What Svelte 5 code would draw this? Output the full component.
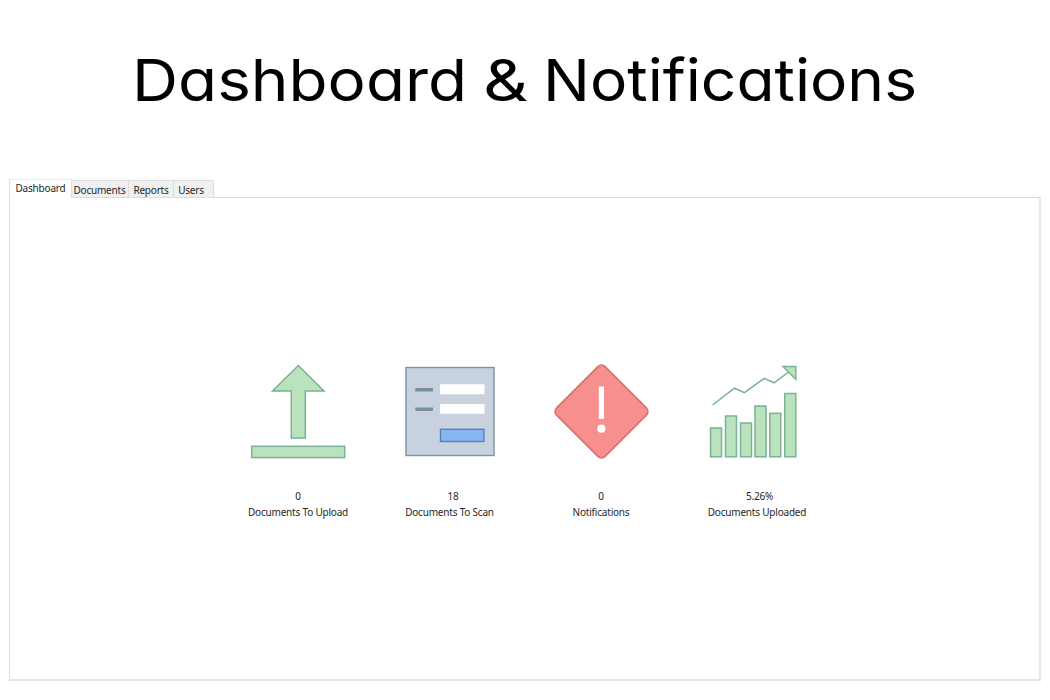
<script>
  const tabs = [
    { name: 'Documents', width: 58 },
    { name: 'Reports', width: 45 },
    { name: 'Users', width: 40 }
  ];
  const bars = [
    [710.5, 428, 11], [725.5, 416, 11], [740.5, 423, 11],
    [755, 406, 11], [769.8, 413.3, 11], [784.8, 393.5, 11]
  ];
</script>

<main>
  <header>
    <svg width="1050" height="170" viewBox="0 0 1050 170" role="heading" aria-level="1" aria-label="Dashboard & Notifications">
      <text x="132" y="101" textLength="335" lengthAdjust="spacingAndGlyphs">Dashboard</text>
      <text x="483" y="101" textLength="45" lengthAdjust="spacingAndGlyphs">&amp;</text>
      <text x="543" y="101" textLength="374" lengthAdjust="spacingAndGlyphs">Notifications</text>
    </svg>
  </header>

  <nav>
    <div class="tab active">Dashboard</div>
    {#each tabs as tab}
      <div class="tab" style:width="{tab.width}px">{tab.name}</div>
    {/each}
  </nav>

  <section class="panel">
    <div class="stats">
      <div class="stat">
        <svg viewBox="248 360 100 100" width="100" height="100">
          <g class="green">
            <path d="M298.3 365.5 324 391H305.3V438H291.3V391H272.5Z" />
            <rect x="251.7" y="446.3" width="93" height="11.3" />
          </g>
        </svg>
        <span class="value">0</span>
        <span class="label">Documents To Upload</span>
      </div>

      <div class="stat scan">
        <svg viewBox="400 360 100 100" width="100" height="100">
          <rect x="406" y="367.5" width="88" height="88" fill="#c8d1de" stroke="#7994aa" stroke-width="1.4" />
          <path d="M415.3 389.8H433M415.3 409.3H433" stroke="#78909f" stroke-width="3.6" />
          <path d="M440 384.2H484.5V394.3H440ZM440 404H484.5V413.8H440Z" fill="#fff" />
          <rect x="440.5" y="429.3" width="43.4" height="12.2" fill="#8ab6f0" stroke="#5580b6" stroke-width="1.4" />
        </svg>
        <span class="value">18</span>
        <span class="label">Documents To Scan</span>
      </div>

      <div class="stat">
        <svg viewBox="551 360 100 100" width="100" height="100">
          <rect x="567.3" y="377.3" width="68.4" height="68.4" rx="5" transform="rotate(45 601.5 411.5)" fill="#f78f8f" stroke="#dc7073" stroke-width="1.8" />
          <rect x="598.8" y="386.5" width="5.2" height="32.5" fill="#fff" />
          <circle cx="601.4" cy="428.7" r="4.1" fill="#fff" />
        </svg>
        <span class="value">0</span>
        <span class="label">Notifications</span>
      </div>

      <div class="stat chart">
        <svg viewBox="707 360 100 100" width="100" height="100">
          <g class="green">
            {#each bars as [x, y, w]}
              <rect {x} {y} width={w} height={456.8 - y} />
            {/each}
            <path class="trend" d="M712.5 405 734.5 388.2 744.5 392.7 764.3 378.3 774 382.8 790 371" />
            <path d="M783 366.5H795.8V379.3Z" />
          </g>
        </svg>
        <span class="value">5.26%</span>
        <span class="label">Documents Uploaded</span>
      </div>
    </div>
  </section>
</main>

<style>
  :global(body) { margin: 0; background: #fff; }
  main {
    box-sizing: border-box;
    width: 1050px;
    height: 700px;
    overflow: hidden;
    display: flex;
    flex-direction: column;
    font: 10px/16px 'Noto Sans', sans-serif;
    letter-spacing: -0.2px;
    color: #262626;
  }
  header { height: 179px; }
  header svg { display: block; }
  header text {
    font: 400 58.2px Inter, sans-serif;
    letter-spacing: 0;
    font-feature-settings: 'cv11' 1;
    fill: #000;
  }
  nav {
    display: flex;
    align-items: flex-end;
    height: 18px;
    padding-left: 9px;
  }
  .tab {
    box-sizing: border-box;
    height: 17px;
    background: #f0f0f0;
    border: 1px solid #dcdcdc;
    border-left: 0;
    border-bottom: 0;
    text-align: center;
    line-height: 18px;
    white-space: nowrap;
  }
  .tab:last-child { padding-right: 5px; }
  .tab.active {
    width: 63px;
    height: 19px;
    margin-bottom: -1px;
    background: #fff;
    border-left: 1px solid #dcdcdc;
    border-top-color: #ececec;
    line-height: 17px;
    position: relative;
  }
  .tab.active + .tab { margin-left: -1px; }
  .panel {
    box-sizing: border-box;
    width: 1032px;
    height: 484px;
    margin-left: 9px;
    border: 1px solid #dcdcdc;
    border-right: 2px solid #e6e6e6;
    border-bottom: 2px solid #e6e6e6;
    padding: 162px 0 0 238px;
  }
  .stats { display: flex; }
  .stat {
    width: 100px;
    margin-right: 52px;
    display: flex;
    flex-direction: column;
    align-items: center;
    white-space: nowrap;
  }
  .stat.scan { margin-right: 51px; }
  .stat.chart { margin-left: 4px; }
  .scan .value { padding-left: 6px; }
  .scan .label { padding-right: 1px; }
  .chart .value { padding-left: 5px; }
  .value { margin-top: 28px; }
  .green { fill: #bae2bd; stroke: #7ab393; stroke-width: 1.5; }
  .trend { fill: none; }
</style>
